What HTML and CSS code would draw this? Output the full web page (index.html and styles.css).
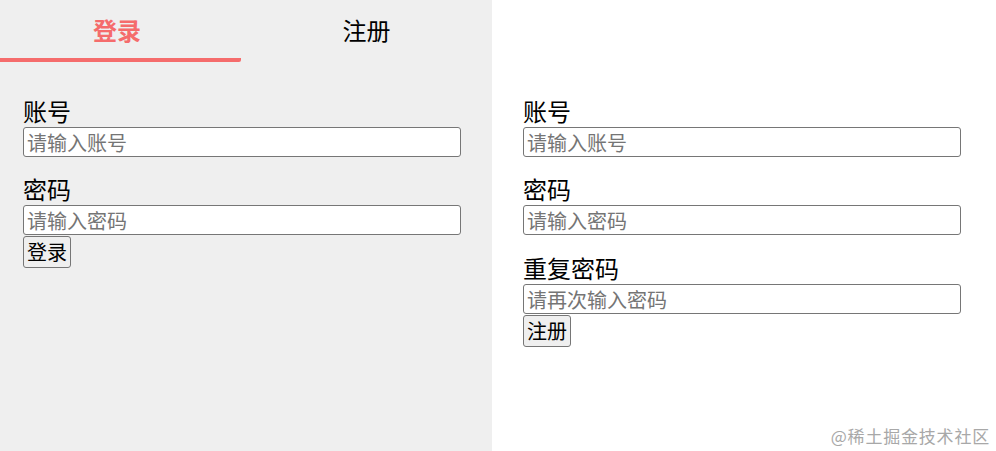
FILE: index.html
```html
<!DOCTYPE html>
<html lang="zh-CN">
<head>
<meta charset="utf-8">
<title>登录 / 注册</title>
<link rel="stylesheet" href="styles.css">
</head>
<body>
<div class="page">
  <section class="panel panel-left">
    <nav class="tabs">
      <div class="tab tab-active">登录</div>
      <div class="tab tab-second">注册</div>
    </nav>
    <form class="form form-login">
      <label class="label">账号</label>
      <input class="input" type="text" placeholder="请输入账号">
      <label class="label label-next">密码</label>
      <input class="input" type="password" placeholder="请输入密码">
      <button class="btn" type="button">登录</button>
    </form>
  </section>
  <section class="panel panel-right">
    <form class="form form-register">
      <label class="label">账号</label>
      <input class="input" type="text" placeholder="请输入账号">
      <label class="label label-next">密码</label>
      <input class="input" type="password" placeholder="请输入密码">
      <label class="label label-next label-third">重复密码</label>
      <input class="input" type="password" placeholder="请再次输入密码">
      <button class="btn" type="button">注册</button>
    </form>
  </section>
  <div class="watermark">@稀土掘金技术社区</div>
</div>
</body>
</html>
```
FILE: styles.css
```css
html, body {
  margin: 0;
  padding: 0;
  height: 100%;
  background: #ffffff;
  font-family: "Microsoft YaHei", "Noto Sans CJK SC", "Noto Sans", sans-serif;
  color: #000;
}

.page {
  position: relative;
  display: flex;
  height: 451px;
}

.panel {
  height: 100%;
}

.panel-left {
  width: 492px;
  background: #efefef;
}

.panel-right {
  flex: 1;
  background: #ffffff;
}

.tabs {
  display: flex;
}

.tab {
  box-sizing: content-box;
  height: 57px;
  padding-top: 1px;
  line-height: 58px;
  font-size: 24px;
  text-align: center;
  border-bottom: 4px solid transparent;
}

.tab-active {
  width: 234px;
  padding-right: 7px;
  color: #f56c6c;
  font-weight: bold;
  border-bottom-color: #f56c6c;
  border-radius: 0 0 2px 0;
}

.tab-second {
  flex: 1;
}

.form {
  display: flex;
  flex-direction: column;
  align-items: flex-start;
}

.form-login {
  padding: 37px 0 0 23px;
}

.form-register {
  padding: 99px 0 0 31px;
}

.label {
  display: block;
  font-size: 24px;
  line-height: 24px;
  height: 24px;
  margin-bottom: 4px;
}

.label-next {
  margin-top: 20px;
}

.label-third {
  margin-top: 21px;
}

.input {
  box-sizing: border-box;
  width: 438px;
  height: 30px;
  margin: 0;
  padding: 0 3px;
  border: 1px solid #767676;
  border-radius: 3px;
  background: #fff;
  font-family: inherit;
  font-size: 20px;
  line-height: 28px;
  color: #000;
  outline: none;
}

.input::placeholder {
  color: #757575;
}

.btn {
  box-sizing: border-box;
  margin-top: 1px;
  height: 32px;
  padding: 0 3px;
  border: 1px solid #767676;
  border-radius: 3px;
  background: #efefef;
  font-family: inherit;
  font-size: 20px;
  line-height: 28px;
  color: #000;
}

.watermark {
  position: absolute;
  right: 6px;
  bottom: 4px;
  font-size: 17px;
  line-height: 22px;
  color: #a8a8a8;
  letter-spacing: 0.8px;
}
```
